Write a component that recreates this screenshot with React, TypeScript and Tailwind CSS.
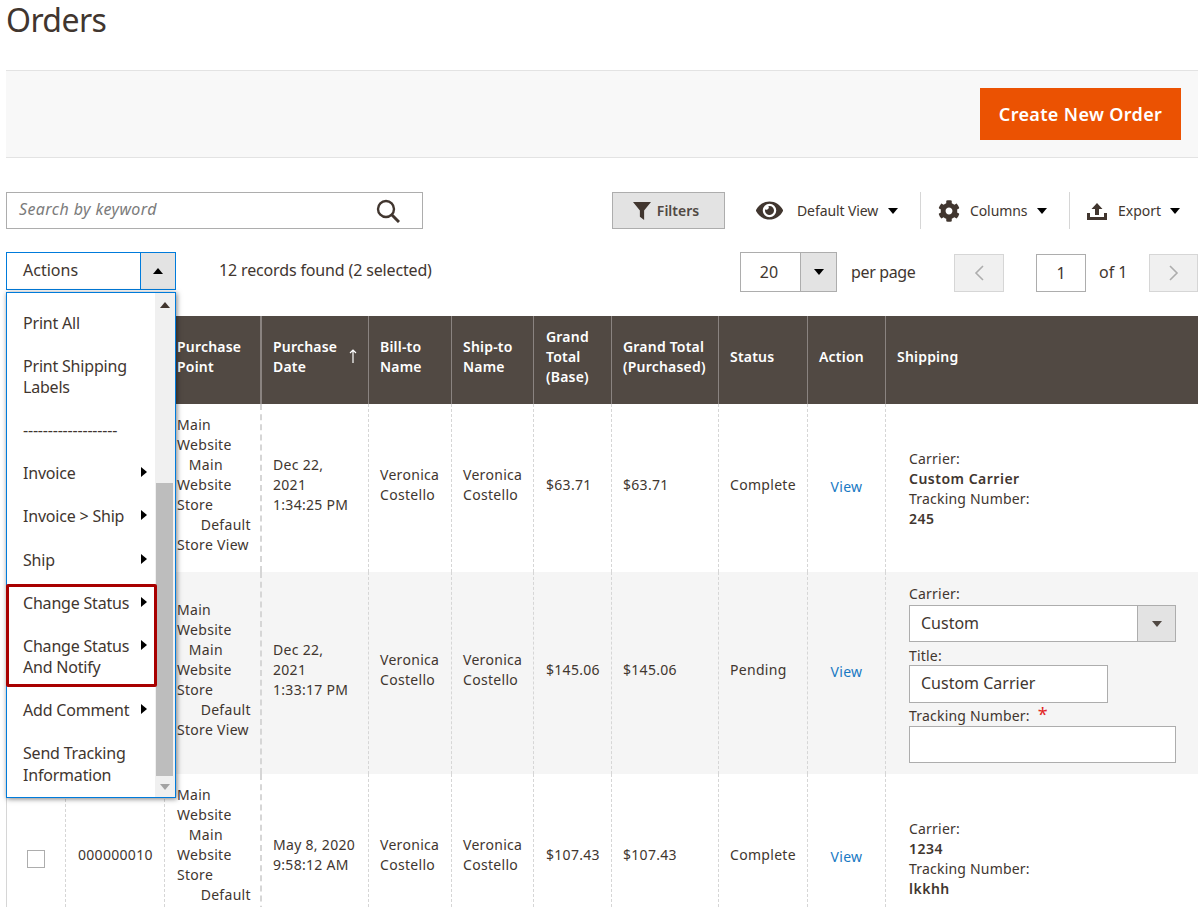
import React from "react";
import { FaCog, FaEye } from "react-icons/fa";

const Caret = ({ dir = "down", cls = "" }: { dir?: "down" | "up" | "right"; cls?: string }) => {
  const pts = dir === "down" ? "0,0 10,0 5,6" : dir === "up" ? "0,6 10,6 5,0" : "0,0 6,5 0,10";
  const w = dir === "right" ? 6 : 10;
  const h = dir === "right" ? 10 : 6;
  return (
    <svg width={w} height={h} viewBox={`0 0 ${w} ${h}`} className={cls}>
      <polygon points={pts} fill="currentColor" />
    </svg>
  );
};

const MenuItem = ({ children, arrow }: { children: React.ReactNode; arrow?: boolean }) => (
  <div className="relative whitespace-nowrap py-[11px] pl-4 pr-6 text-[16px] leading-[21px] tracking-[-0.2px]">
    {children}
    {arrow && <Caret dir="right" cls="absolute right-[8px] top-[15px] text-black" />}
  </div>
);

const PurchasePoint = () => (
  <div className="ml-px">
    Main
    <br />
    Website
    <br />
    {"\u00a0\u00a0\u00a0"}Main
    <br />
    Website
    <br />
    Store
    <br />
    {"\u00a0\u00a0\u00a0\u00a0\u00a0\u00a0"}Default
    <br />
    Store View
  </div>
);

const Th = ({ children, cls = "" }: { children: React.ReactNode; cls?: string }) => (
  <th className={`border-l border-[#8a8380] pb-[6px] pl-[11px] pr-0 text-left align-middle text-[14px] font-semibold leading-[20px] tracking-[0.2px] text-white ${cls}`}>
    {children}
  </th>
);

const Td = ({ children, cls = "" }: { children?: React.ReactNode; cls?: string }) => (
  <td className={`border-l border-dashed border-[#d6d6d6] pb-[6px] pl-[11px] pr-0 align-middle tracking-[0.3px] ${cls}`}>{children}</td>
);

const Row = ({
  id,
  date,
  base,
  status,
  shipping,
  striped,
  height,
}: {
  id?: string;
  date: React.ReactNode;
  base: string;
  status: string;
  shipping: React.ReactNode;
  striped?: boolean;
  height: string;
}) => (
  <tr className={`${height} ${striped ? "bg-[#f5f5f5]" : "bg-white"}`}>
    <td className="border-l border-[#d6d6d6] text-center align-middle">
      <span className="inline-block h-[18px] w-[18px] border border-[#adadad] bg-white align-middle" />
    </td>
    <Td cls="whitespace-nowrap">
      <div className="ml-px">{id}</div>
    </Td>
    <Td>
      <PurchasePoint />
    </Td>
    <td className="border-l-2 border-dashed border-[#d6d6d6] pb-[6px] pl-[11px] align-middle tracking-[0.3px]">{date}</td>
    <Td>
      Veronica
      <br />
      Costello
    </Td>
    <Td>
      Veronica
      <br />
      Costello
    </Td>
    <Td>
      <div className="ml-px">{base}</div>
    </Td>
    <Td>{base}</Td>
    <Td>{status}</Td>
    <td className="border-l border-dashed border-[#d6d6d6] pb-[2px] text-center align-middle tracking-[0.3px] text-[#1979c3]">View</td>
    <td className="border-l border-dashed border-[#d6d6d6] pl-[23px] align-middle tracking-[0.2px]">{shipping}</td>
  </tr>
);

const ShipInfo = ({ carrier, no }: { carrier: string; no: string }) => (
  <div className="pt-[2px]">
    Carrier:
    <br />
    <b className="font-semibold tracking-[0.5px]">{carrier}</b>
    <br />
    Tracking Number:
    <br />
    <b className="font-semibold tracking-[0.5px]">{no}</b>
  </div>
);

export default function App() {
  return (
    <div className="relative h-[907px] w-[1204px] overflow-hidden bg-white px-[6px] font-['Open_Sans',sans-serif] text-[14px] leading-[20px] text-[#41362f]">
      <h1 className="h-[70px] text-[32px] leading-[40px] tracking-[-0.6px] text-[#41362f]">Orders</h1>

      <div className="flex h-[88px] items-center justify-end border-y border-[#e3e3e3] bg-[#f8f8f8] pr-[17px]">
        <div className="flex h-[52px] w-[201px] items-center justify-center bg-[#eb5202] text-[18px] font-semibold tracking-[0.35px] text-white">
          Create New Order
        </div>
      </div>

      <div className="mt-[34px] flex h-[37px] items-center">
        <div className="flex h-[37px] w-[417px] items-center justify-between border border-[#adadad] pl-3 pr-[22px]">
          <span className="-translate-y-[2px] text-[16px] italic tracking-[0.4px] text-[#7b7b7b]">Search by keyword</span>
          <svg width="24" height="24" viewBox="0 0 24 24" fill="none" stroke="#41362f" strokeWidth="2.4">
            <circle cx="10" cy="10" r="8" />
            <path d="M16 16 L23 23" strokeWidth="3" />
          </svg>
        </div>
        <div className="ml-[189px] flex h-[37px] w-[113px] items-center justify-center gap-[6px] border border-[#adadad] bg-[#e3e3e3] pr-[5px] font-semibold text-[#514943]">
          <svg width="18" height="18" viewBox="0 0 17 17">
            <polygon points="0,0 17,0 10.5,8 10.5,17 6.5,14 6.5,8" fill="#41362f" />
          </svg>
          Filters
        </div>
        <div className="ml-[31px] flex w-[164px] items-center">
          <FaEye className="text-[27px] text-[#41362f]" />
          <span className="ml-[14px] text-[14px] tracking-[-0.1px]">Default View</span>
          <Caret cls="ml-[10px] text-black" />
        </div>
        <div className="flex h-[37px] w-[149px] items-center border-l border-[#d6d6d6] pl-[17px]">
          <FaCog className="text-[22px] text-[#41362f]" />
          <span className="ml-[10px] text-[14px] tracking-[-0.1px]">Columns</span>
          <Caret cls="ml-[10px] text-black" />
        </div>
        <div className="flex h-[37px] items-center border-l border-[#d6d6d6] pl-[17px]">
          <svg width="20" height="18" viewBox="0 0 20 18">
            <path d="M0 11 H3 V15 H17 V11 H20 V18 H0 Z M10 1 L15.5 7 H12 V13 H8 V7 H4.5 Z" fill="#41362f" />
          </svg>
          <span className="ml-[11px]">Export</span>
          <Caret cls="ml-[9px] text-black" />
        </div>
      </div>

      <div className="mt-[23px] flex h-[40px] items-start">
        <div className="flex h-[38px] w-[170px] border border-[#007bdb] text-[16px] leading-[34px]">
          <span className="flex-1 pl-4">Actions</span>
          <span className="flex w-[35px] items-center justify-center border-l border-[#007bdb] bg-[#e3e3e3]">
            <Caret dir="up" cls="text-black" />
          </span>
        </div>
        <div className="ml-[43px] text-[16px] leading-[36px] tracking-[-0.15px]">12 records found (2 selected)</div>
        <div className="ml-auto flex h-[40px] items-center">
          <div className="flex h-[40px] w-[97px] border border-[#adadad] text-[16px] leading-[38px]">
            <span className="w-[59px] pr-[3px] text-center">20</span>
            <span className="flex flex-1 items-center justify-center border-l border-[#adadad] bg-[#e3e3e3]">
              <Caret cls="text-black" />
            </span>
          </div>
          <span className="ml-[14px] w-[103px] text-[16px] tracking-[-0.35px]">per page</span>
          <div className="mt-[2px] flex h-[38px] w-[50px] items-center justify-center border border-[#d6d6d6] bg-[#f0f0f0]">
            <svg width="10" height="16" viewBox="0 0 10 16" fill="none" stroke="#adadad" strokeWidth="1.6">
              <path d="M9 1 L2 8 L9 15" />
            </svg>
          </div>
          <div className="ml-[32px] mt-[2px] h-[38px] w-[50px] border border-[#adadad] text-center text-[16px] leading-[36px]">1</div>
          <span className="ml-[13px] w-[50px] text-[16px]">of 1</span>
          <div className="mt-[2px] flex h-[38px] w-[49px] items-center justify-center border border-[#d6d6d6] bg-[#f0f0f0]">
            <svg width="10" height="16" viewBox="0 0 10 16" fill="none" stroke="#adadad" strokeWidth="1.6">
              <path d="M1 1 L8 8 L1 15" />
            </svg>
          </div>
        </div>
      </div>

      <table className="mt-[24px] w-[1192px] table-fixed border-separate border-spacing-0">
        <colgroup>
          <col className="w-[59px]" />
          <col className="w-[99px]" />
          <col className="w-[96px]" />
          <col className="w-[108px]" />
          <col className="w-[83px]" />
          <col className="w-[82px]" />
          <col className="w-[78px]" />
          <col className="w-[107px]" />
          <col className="w-[89px]" />
          <col className="w-[78px]" />
          <col className="w-[313px]" />
        </colgroup>
        <thead>
          <tr className="h-[88px] bg-[#514943]">
            <Th> </Th>
            <Th> </Th>
            <Th>
              <div className="ml-px">
                Purchase
                <br />
                Point
              </div>
            </Th>
            <th className="relative border-l-2 border-[#8a8380] pb-[6px] pl-[11px] text-left align-middle text-[14px] font-semibold leading-[20px] tracking-[0.2px] text-white">
              Purchase
              <br />
              Date
              <svg width="8" height="14" viewBox="0 0 8 14" className="absolute right-[11px] top-[33px]" fill="none" stroke="#ffffff" strokeWidth="1.2">
                <path d="M4 14 V1 M1 4 L4 1 L7 4" />
              </svg>
            </th>
            <Th>
              Bill-to
              <br />
              Name
            </Th>
            <Th>
              Ship-to
              <br />
              Name
            </Th>
            <Th>
              <div className="ml-px">
                Grand
                <br />
                Total
                <br />
                (Base)
              </div>
            </Th>
            <Th>
              Grand Total
              <br />
              (Purchased)
            </Th>
            <Th>Status</Th>
            <Th>Action</Th>
            <Th>Shipping</Th>
          </tr>
        </thead>
        <tbody>
          <Row
            height="h-[168px]"
            date={
              <>
                Dec 22,
                <br />
                2021
                <br />
                1:34:25 PM
              </>
            }
            base="$63.71"
            status="Complete"
            shipping={<ShipInfo carrier="Custom Carrier" no="245" />}
          />
          <Row
            striped
            height="h-[202px]"
            date={
              <>
                Dec 22,
                <br />
                2021
                <br />
                1:33:17 PM
              </>
            }
            base="$145.06"
            status="Pending"
            shipping={
              <div className="flex flex-col items-start">
                <span className="leading-[22px]">Carrier:</span>
                <div className="flex h-[37px] w-[267px] border border-[#adadad] bg-white text-[16px] leading-[35px] tracking-normal">
                  <span className="flex-1 pl-[11px]">Custom</span>
                  <span className="flex w-[38px] items-center justify-center border-l border-[#adadad] bg-[#e3e3e3]">
                    <Caret cls="text-[#514943]" />
                  </span>
                </div>
                <span className="mt-[4px] leading-[19px]">Title:</span>
                <div className="h-[38px] w-[199px] border border-[#adadad] bg-white pl-[11px] text-[16px] leading-[34px] tracking-normal">Custom Carrier</div>
                <span className="mt-[1px] leading-[20px]">
                  Tracking Number:<span className="ml-2 text-[18px] text-[#e22626]">*</span>
                </span>
                <div className="h-[37px] w-[267px] border border-[#adadad] bg-white" />
              </div>
            }
          />
          <Row
            height="h-[168px]"
            id="000000010"
            date={
              <>
                May 8, 2020
                <br />
                9:58:12 AM
              </>
            }
            base="$107.43"
            status="Complete"
            shipping={<ShipInfo carrier="1234" no="lkkhh" />}
          />
        </tbody>
      </table>

      <div className="absolute left-[6px] top-[292px] flex h-[506px] w-[170px] border border-[#007bdb] bg-white pt-[9px] shadow-[1px_1px_5px_rgba(0,0,0,0.5)]">
        <div className="w-[148px] flex-none">
          <MenuItem>Print All</MenuItem>
          <MenuItem>
            Print Shipping
            <br />
            Labels
          </MenuItem>
          <MenuItem>-------------------</MenuItem>
          <MenuItem arrow>Invoice</MenuItem>
          <MenuItem arrow>Invoice &gt; Ship</MenuItem>
          <div className="pt-px">
            <MenuItem arrow>Ship</MenuItem>
          </div>
          <MenuItem arrow>Change Status</MenuItem>
          <MenuItem arrow>
            Change Status
            <br />
            And Notify
          </MenuItem>
          <MenuItem arrow>Add Comment</MenuItem>
          <MenuItem>
            Send Tracking
            <div className="mt-px">Information</div>
          </MenuItem>
        </div>
        <div className="relative -mt-[9px] flex flex-1 flex-col bg-[#f0f0f0]">
          <Caret dir="up" cls="absolute left-[5px] top-[9px] text-[#41362f]" />
          <div className="ml-[1px] mr-[2px] mt-[190px] h-[293px] bg-[#bdbdbd]" />
          <Caret dir="down" cls="absolute bottom-[7px] left-[5px] text-[#a3a3a3]" />
        </div>
      </div>

      <div className="absolute left-[6px] top-[584px] h-[103px] w-[151px] rounded-[2px] border-[3px] border-[#a80000]" />
    </div>
  );
}
